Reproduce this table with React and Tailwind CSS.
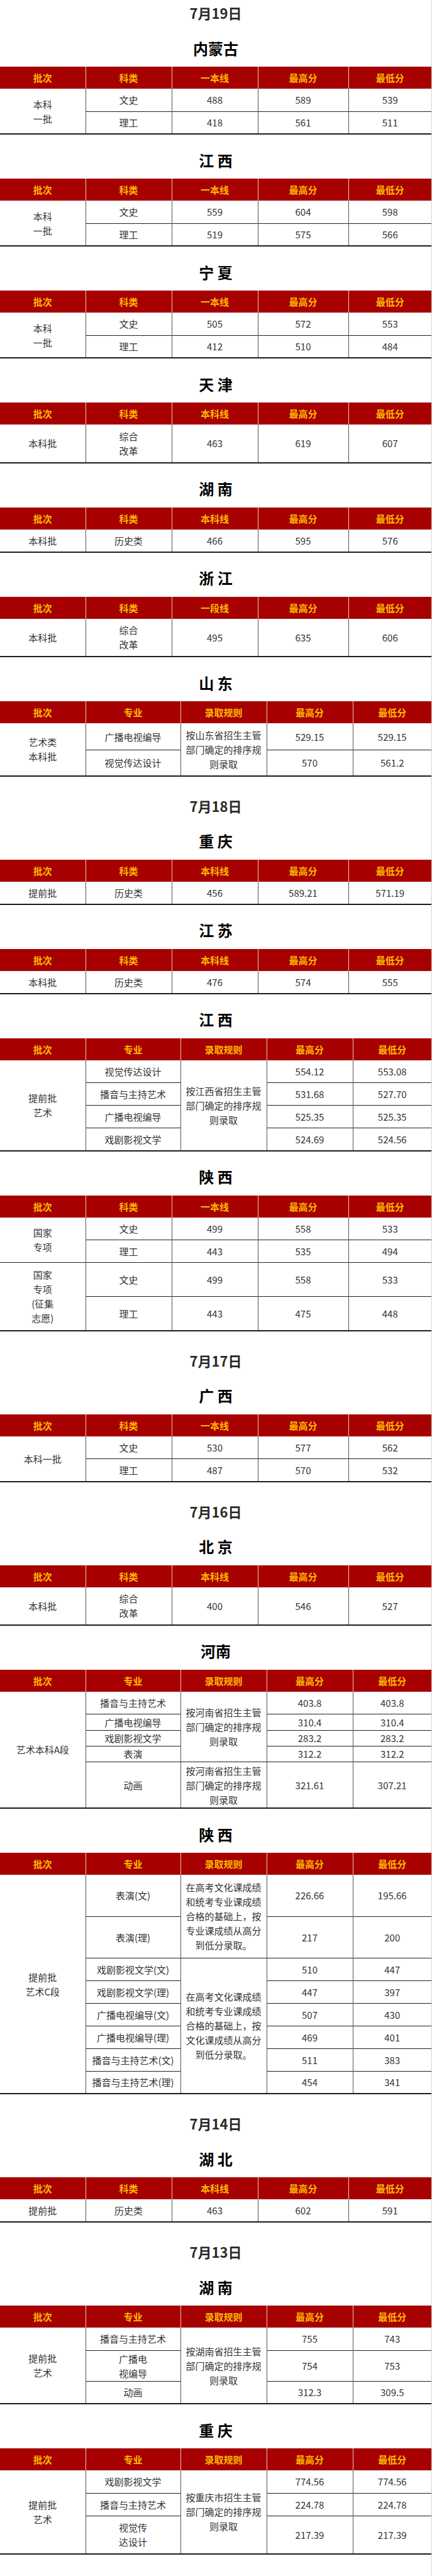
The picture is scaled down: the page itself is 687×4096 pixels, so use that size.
import React from "react";

const NARROW_COLS = ["w-[136px]", "w-[137px]", "w-[137px]", "w-[144px]", "w-[132px]"];
const WIDE_COLS = ["w-[136px]", "w-[151px]", "w-[137px]", "w-[137px]", "w-[125px]"];

const RULE = (p) => `按${p}招生主管\n部门确定的排序规\n则录取`;

const sections = [
  { date: "7月19日", first: true },
  {
    prov: "内蒙古",
    third: "一本线",
    rows: [
      { h: "h-[36px]", batch: { t: "本科\n一批", rs: 2 }, cells: ["文史", "488", "589", "539"] },
      { h: "h-[36px]", cells: ["理工", "418", "561", "511"] },
    ],
  },
  {
    prov: "江 西",
    third: "一本线",
    rows: [
      { h: "h-[36px]", batch: { t: "本科\n一批", rs: 2 }, cells: ["文史", "559", "604", "598"] },
      { h: "h-[36px]", cells: ["理工", "519", "575", "566"] },
    ],
  },
  {
    prov: "宁 夏",
    third: "一本线",
    rows: [
      { h: "h-[36px]", batch: { t: "本科\n一批", rs: 2 }, cells: ["文史", "505", "572", "553"] },
      { h: "h-[36px]", cells: ["理工", "412", "510", "484"] },
    ],
  },
  {
    prov: "天 津",
    third: "本科线",
    rows: [{ h: "h-[60.5px]", batch: { t: "本科批" }, cells: ["综合\n改革", "463", "619", "607"] }],
  },
  {
    prov: "湖 南",
    third: "本科线",
    rows: [{ h: "h-[36px]", batch: { t: "本科批" }, cells: ["历史类", "466", "595", "576"] }],
  },
  {
    prov: "浙 江",
    third: "一段线",
    rows: [{ h: "h-[60.5px]", batch: { t: "本科批" }, cells: ["综合\n改革", "495", "635", "606"] }],
  },
  {
    prov: "山 东",
    wide: true,
    rows: [
      {
        h: "h-[42.5px]",
        batch: { t: "艺术类\n本科批", rs: 2 },
        cells: ["广播电视编导", { t: RULE("山东省"), rs: 2 }, "529.15", "529.15"],
      },
      { h: "h-[41px]", cells: ["视觉传达设计", "570", "561.2"] },
    ],
  },
  { date: "7月18日" },
  {
    prov: "重 庆",
    third: "本科线",
    rows: [{ h: "h-[36px]", batch: { t: "提前批" }, cells: ["历史类", "456", "589.21", "571.19"] }],
  },
  {
    prov: "江 苏",
    third: "本科线",
    rows: [{ h: "h-[36px]", batch: { t: "本科批" }, cells: ["历史类", "476", "574", "555"] }],
  },
  {
    prov: "江 西",
    wide: true,
    rows: [
      {
        h: "h-[36px]",
        batch: { t: "提前批\n艺术", rs: 4 },
        cells: ["视觉传达设计", { t: RULE("江西省"), rs: 4 }, "554.12", "553.08"],
      },
      { h: "h-[36px]", cells: ["播音与主持艺术", "531.68", "527.70"] },
      { h: "h-[36px]", cells: ["广播电视编导", "525.35", "525.35"] },
      { h: "h-[36px]", cells: ["戏剧影视文学", "524.69", "524.56"] },
    ],
  },
  {
    prov: "陕 西",
    third: "一本线",
    rows: [
      { h: "h-[36px]", batch: { t: "国家\n专项", rs: 2 }, cells: ["文史", "499", "558", "533"] },
      { h: "h-[36px]", cells: ["理工", "443", "535", "494"] },
      { h: "h-[54px]", batch: { t: "国家\n专项\n(征集\n志愿)", rs: 2 }, cells: ["文史", "499", "558", "533"] },
      { h: "h-[54px]", cells: ["理工", "443", "475", "448"] },
    ],
  },
  { date: "7月17日" },
  {
    prov: "广 西",
    third: "一本线",
    rows: [
      { h: "h-[36px]", batch: { t: "本科一批", rs: 2 }, cells: ["文史", "530", "577", "562"] },
      { h: "h-[36px]", cells: ["理工", "487", "570", "532"] },
    ],
  },
  { date: "7月16日" },
  {
    prov: "北 京",
    third: "本科线",
    rows: [{ h: "h-[60px]", batch: { t: "本科批" }, cells: ["综合\n改革", "400", "546", "527"] }],
  },
  {
    prov: "河南",
    wide: true,
    rows: [
      {
        h: "h-[36px]",
        batch: { t: "艺术本科A段", rs: 5 },
        cells: ["播音与主持艺术", { t: RULE("河南省"), rs: 4 }, "403.8", "403.8"],
      },
      { h: "h-[25.5px]", cells: ["广播电视编导", "310.4", "310.4"] },
      { h: "h-[25px]", cells: ["戏剧影视文学", "283.2", "283.2"] },
      { h: "h-[25.5px]", cells: ["表演", "312.2", "312.2"] },
      { h: "h-[73.5px]", cells: ["动画", RULE("河南省"), "321.61", "307.21"] },
    ],
  },
  {
    prov: "陕 西",
    wide: true,
    rows: [
      {
        h: "h-[66px]",
        batch: { t: "提前批\n艺术C段", rs: 8 },
        cells: [
          "表演(文)",
          { t: "在高考文化课成绩\n和统考专业课成绩\n合格的基础上，按\n专业课成绩从高分\n到低分录取。", rs: 2 },
          "226.66",
          "195.66",
        ],
      },
      { h: "h-[66px]", cells: ["表演(理)", "217", "200"] },
      {
        h: "h-[36px]",
        cells: [
          "戏剧影视文学(文)",
          { t: "在高考文化课成绩\n和统考专业课成绩\n合格的基础上，按\n文化课成绩从高分\n到低分录取。", rs: 6 },
          "510",
          "447",
        ],
      },
      { h: "h-[36px]", cells: ["戏剧影视文学(理)", "447", "397"] },
      { h: "h-[36px]", cells: ["广播电视编导(文)", "507", "430"] },
      { h: "h-[36px]", cells: ["广播电视编导(理)", "469", "401"] },
      { h: "h-[36px]", cells: ["播音与主持艺术(文)", "511", "383"] },
      { h: "h-[36px]", cells: ["播音与主持艺术(理)", "454", "341"] },
    ],
  },
  { date: "7月14日" },
  {
    prov: "湖 北",
    third: "本科线",
    rows: [{ h: "h-[36px]", batch: { t: "提前批" }, cells: ["历史类", "463", "602", "591"] }],
  },
  { date: "7月13日" },
  {
    prov: "湖 南",
    wide: true,
    rows: [
      {
        h: "h-[36px]",
        batch: { t: "提前批\n艺术", rs: 3 },
        cells: ["播音与主持艺术", { t: RULE("湖南省"), rs: 3 }, "755", "743"],
      },
      { h: "h-[49px]", cells: ["广播电\n视编导", "754", "753"] },
      { h: "h-[36px]", cells: ["动画", "312.3", "309.5"] },
    ],
  },
  {
    prov: "重 庆",
    wide: true,
    rows: [
      {
        h: "h-[36px]",
        batch: { t: "提前批\n艺术", rs: 3 },
        cells: ["戏剧影视文学", { t: RULE("重庆市"), rs: 3 }, "774.56", "774.56"],
      },
      { h: "h-[36.5px]", cells: ["播音与主持艺术", "224.78", "224.78"] },
      { h: "h-[60px]", cells: ["视觉传\n达设计", "217.39", "217.39"] },
    ],
  },
  { date: "7月12日" },
];

function DateHead({ text, first }) {
  return (
    <div
      className={`flex items-center justify-center text-[22px] leading-none font-bold text-[#2a2a2a] ${
        first ? "h-[36px] pt-[4px]" : "h-[62px] pt-[30px]"
      }`}
    >
      {text}
    </div>
  );
}

function ProvHead({ text }) {
  return (
    <div className="flex h-[70px] items-center justify-center pt-[11px] text-[24px] leading-none font-bold whitespace-pre text-black">
      {text}
    </div>
  );
}

function ScoreTable({ wide, third, rows }) {
  const heads = wide
    ? ["批次", "专业", "录取规则", "最高分", "最低分"]
    : ["批次", "科类", third, "最高分", "最低分"];
  const cols = wide ? WIDE_COLS : NARROW_COLS;
  const cellBase = "p-0 px-1 text-center align-middle text-[15px] leading-[23px] text-[#333] whitespace-pre-line";

  return (
    <table className="w-full table-fixed border-collapse border-b-2 border-b-[#1c1c1c]">
      <colgroup>
        {cols.map((c, i) => (
          <col key={i} className={c} />
        ))}
      </colgroup>
      <thead>
        <tr className="h-[35px] bg-[#a60000]">
          {heads.map((h, i) => (
            <th
              key={i}
              className={`p-0 text-center text-[15px] leading-none font-bold text-[#ffb800] ${
                i ? "border-l border-l-[#eec4c4]" : ""
              }`}
            >
              {h}
            </th>
          ))}
        </tr>
      </thead>
      <tbody>
        {rows.map((r, ri) => (
          <tr key={ri} className={r.h}>
            {r.batch && (
              <td
                rowSpan={r.batch.rs || 1}
                className={`${cellBase} ${ri ? "border-t border-t-[#222]" : ""}`}
              >
                {r.batch.t}
              </td>
            )}
            {r.cells.map((c, ci) => {
              const cell = typeof c === "string" ? { t: c } : c;
              return (
                <td
                  key={ci}
                  rowSpan={cell.rs || 1}
                  className={`${cellBase} border-l border-l-[#555] ${ri ? "border-t border-t-[#222]" : ""}`}
                >
                  {cell.t}
                </td>
              );
            })}
          </tr>
        ))}
      </tbody>
    </table>
  );
}

export default function App() {
  return (
    <div className="w-[687px] border-r border-r-[#d6d6d6] bg-white font-['Noto_Sans_CJK_SC','Noto_Sans',sans-serif]">
      {sections.map((s, i) =>
        s.date ? (
          <DateHead key={i} text={s.date} first={s.first} />
        ) : (
          <div key={i}>
            <ProvHead text={s.prov} />
            <ScoreTable wide={s.wide} third={s.third} rows={s.rows} />
          </div>
        )
      )}
    </div>
  );
}
